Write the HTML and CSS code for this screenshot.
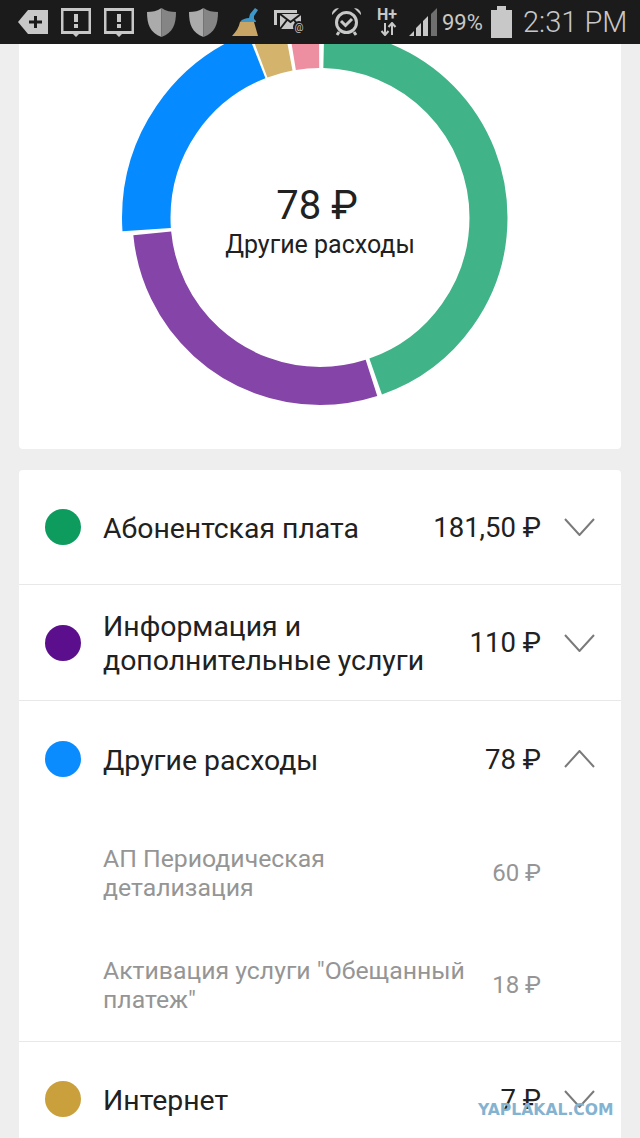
FILE: index.html
```html
<!DOCTYPE html>
<html>
  <head>
    <meta charset="UTF-8" />
    <title>Расходы</title>
    <link rel="stylesheet" href="styles.css">
  </head>
  <body>
    <header class="status-bar">
      <svg class="icon icon-tag" viewBox="0 0 30 24">
        <path class="fill-light" d="M0 12 10 0h20v24H10z" />
        <path class="line-dark" d="M11 12h13M17.500 6v12" />
      </svg>
      <svg class="icon icon-note" viewBox="0 0 30 29">
        <path class="fill-light" d="M0 0h30v26H18l-3 3-3-3H0z" />
        <rect class="fill-dark" x="2.500" y="3" width="25" height="20" />
        <rect class="fill-light" x="13" y="6" width="4" height="8" />
        <rect class="fill-light" x="13" y="16" width="4" height="4" />
      </svg>
      <svg class="icon icon-note" viewBox="0 0 30 29">
        <path class="fill-light" d="M0 0h30v26H18l-3 3-3-3H0z" />
        <rect class="fill-dark" x="2.500" y="3" width="25" height="20" />
        <rect class="fill-light" x="13" y="6" width="4" height="8" />
        <rect class="fill-light" x="13" y="16" width="4" height="4" />
      </svg>
      <svg class="icon icon-shield" viewBox="0 0 29 29">
        <path class="shield-left" d="M14.500 0C10 3 5 4 0 4c0 12 3 21 14.500 25z" />
        <path class="shield-right" d="M14.500 0c4.500 3 9.500 4 14.500 4 0 12-3 21-14.500 25z" />
      </svg>
      <svg class="icon icon-shield" viewBox="0 0 29 29">
        <path class="shield-left" d="M14.500 0C10 3 5 4 0 4c0 12 3 21 14.500 25z" />
        <path class="shield-right" d="M14.500 0c4.500 3 9.500 4 14.500 4 0 12-3 21-14.500 25z" />
      </svg>
      <svg class="icon icon-broom" viewBox="0 0 28 28">
        <path class="broom-bristle" d="M8 14h14l4 14H0C4 24 7 19 8 14z" />
        <path class="broom-blue" d="M8 14c2-3 6-4 9-4l1-4 5-6 3 2-4 6 0 3c2 1 2 3 2 3H8z" />
      </svg>
      <svg class="icon icon-mail" viewBox="0 0 31 23">
        <path class="line-light" d="M1.500 15V1.500H23" />
        <rect class="fill-light" x="6" y="4" width="21" height="15" />
        <path class="line-dark thin" d="M6 4l10.500 8L27 4M6 19l7-9M27 19l-7-9" />
        <circle class="fill-dark" cx="25" cy="17" r="6" />
        <text class="mail-at" x="25" y="21" text-anchor="middle">@</text>
      </svg>
      <div class="status-right">
        <svg class="icon icon-alarm" viewBox="0 0 29 28">
          <circle class="line-light" cx="14.500" cy="14.500" r="10" />
          <path class="line-light" d="M9 13l4.500 4.500L20 11M7 24l-2 3M22 24l2 3" />
          <path class="fill-light" d="M0 6c0-3 3-6 7-6L0 7zM29 6c0-3-3-6-7-6l7 7z" />
        </svg>
        <div class="net">
          <span class="net-label">H+</span>
          <svg class="icon icon-net" viewBox="0 0 22 14">
            <path class="line-light thin" d="M8 1v12M4.500 9l3.500 4 3.500-4M15 13V2M11.500 5l3.500-4 3.500 4" />
          </svg>
        </div>
        <svg class="icon icon-signal" viewBox="0 0 28 28">
          <path class="fill-light" d="M0 28l5-5v5zM7 28v-8l5-5v13zM14 28V13l5-5v20z" />
          <path class="fill-mid" d="M22 28V6l6-6v28z" />
        </svg>
        <span class="battery-text">99%</span>
        <svg class="icon icon-battery" viewBox="0 0 21 32">
          <path class="fill-light" d="M0 4h6V0h9v4h6v28H0z" />
        </svg>
        <span class="clock">2:31 PM</span>
      </div>
    </header>

    <main>
      <section class="card chart-card">
        <svg class="donut" viewBox="-301 -173.500 602 405">
          <g transform="rotate(-90)">
            <circle class="seg seg-green" r="168.500" pathLength="360" stroke-dasharray="159.400 360" stroke-dashoffset="-1.300" />
            <circle class="seg seg-purple" r="168.500" pathLength="360" stroke-dasharray="102.400 360" stroke-dashoffset="-162.200" />
            <circle class="seg seg-blue" r="173.750" pathLength="360" stroke-dasharray="72.600 360" stroke-dashoffset="-266" />
            <circle class="seg seg-gold" r="168.500" pathLength="360" stroke-dasharray="10 360" stroke-dashoffset="-339.400" />
            <circle class="seg seg-pink" r="168.500" pathLength="360" stroke-dasharray="9 360" stroke-dashoffset="-350.700" />
          </g>
        </svg>
        <div class="donut-center">
          <div class="donut-value">78 ₽</div>
          <div class="donut-label">Другие расходы</div>
        </div>
      </section>

      <section class="card list-card">
        <div class="row">
          <span class="dot dot-green"></span>
          <span class="row-name">Абонентская плата</span>
          <span class="row-sum">181,50 ₽</span>
          <svg class="chevron" viewBox="0 0 31 18"><path d="M1 1l14.500 16L30 1" /></svg>
        </div>
        <div class="row row-tall">
          <span class="dot dot-purple"></span>
          <span class="row-name">Информация и дополнительные услуги</span>
          <span class="row-sum">110 ₽</span>
          <svg class="chevron" viewBox="0 0 31 18"><path d="M1 1l14.500 16L30 1" /></svg>
        </div>
        <div class="group">
          <div class="row row-open">
            <span class="dot dot-blue"></span>
            <span class="row-name">Другие расходы</span>
            <span class="row-sum">78 ₽</span>
            <svg class="chevron" viewBox="0 0 31 18"><path d="M1 17L15.500 1 30 17" /></svg>
          </div>
          <div class="sub-row">
            <span class="sub-name">АП Периодическая детализация</span>
            <span class="sub-sum">60 ₽</span>
          </div>
          <div class="sub-row">
            <span class="sub-name">Активация услуги "Обещанный платеж"</span>
            <span class="sub-sum">18 ₽</span>
          </div>
        </div>
        <div class="row">
          <span class="dot dot-gold"></span>
          <span class="row-name">Интернет</span>
          <span class="row-sum">7 ₽</span>
          <svg class="chevron" viewBox="0 0 31 18"><path d="M1 1l14.500 16L30 1" /></svg>
        </div>
      </section>
    </main>

    <div class="watermark">YAPLAKAL.COM</div>
  </body>
</html>
```

FILE: styles.css
```css
html,
body {
  height: 1138px;
  overflow: hidden;
}

body {
  margin: 0;
  background-color: #eeeeee;
  color: #212121;
  font-family: Roboto, "Liberation Sans", sans-serif;
  position: relative;
}

/* status bar */
.status-bar {
  height: 44px;
  box-sizing: border-box;
  padding-left: 18px;
  background-color: #1b1b1b;
  display: flex;
  align-items: center;
  gap: 13px;
  color: #c8c8c8;
}

.status-right {
  display: flex;
  align-items: center;
  margin-left: 14px;
}

.icon {
  display: block;
  flex: none;
}

.icon-tag { width: 30px; height: 24px; }
.icon-note { width: 30px; height: 29px; }
.icon-shield { width: 29px; height: 29px; }
.icon-broom { width: 28px; height: 28px; margin-left: 1px; }
.icon-mail { width: 31px; height: 23px; margin: 0 0 1px 1px; }
.icon-alarm { width: 29px; height: 28px; margin-right: 16px; }
.icon-net { width: 22px; height: 14px; }
.icon-signal { width: 28px; height: 28px; margin-right: 5px; }
.icon-battery { width: 21px; height: 32px; margin: 0 11px 0 9px; }

.fill-light { fill: #c8c8c8; }
.fill-mid { fill: #6f6f6f; }
.fill-dark { fill: #1b1b1b; }
.shield-left { fill: #ababab; }
.shield-right { fill: #858585; }
.broom-bristle { fill: #c9a565; }
.broom-blue { fill: #3d97c9; }

.line-light,
.line-dark {
  fill: none;
  stroke-width: 3;
}

.line-light { stroke: #c8c8c8; }
.line-dark { stroke: #1b1b1b; }
.thin { stroke-width: 2; }

.mail-at {
  font-size: 10px;
  fill: #c8c8c8;
}

.net {
  width: 22px;
  margin-right: 10px;
}

.net-label {
  display: block;
  font-size: 16px;
  font-weight: 700;
  line-height: 14px;
  white-space: nowrap;
}

.battery-text {
  font-size: 22px;
  width: 40px;
  white-space: nowrap;
}

.clock {
  font-size: 29px;
  font-weight: 300;
  white-space: nowrap;
}

/* cards */
main {
  padding: 0 19px;
}

.card {
  background-color: #ffffff;
  border-radius: 4px;
  position: relative;
}

.chart-card {
  height: 405px;
  border-radius: 0 0 4px 4px;
  margin-bottom: 21px;
}

.donut {
  display: block;
  width: 602px;
  height: 405px;
}

.seg {
  fill: none;
  stroke-width: 38;
}

.seg-green { stroke: #40b388; }
.seg-purple { stroke: #8544a8; }
.seg-blue { stroke: #058bff; stroke-width: 48.500; }
.seg-gold { stroke: #d4b46c; }
.seg-pink { stroke: #ed8fa0; }

.donut-center {
  position: absolute;
  top: 138px;
  left: 0;
  right: 0;
  text-align: center;
}

.donut-value {
  font-size: 40px;
  line-height: 48px;
  padding-right: 6px;
}

.donut-label {
  font-size: 25px;
  line-height: 32px;
  margin-top: -1px;
}

/* list */
.row {
  height: 115px;
  box-sizing: border-box;
  padding: 0 26px;
  display: flex;
  align-items: center;
  border-bottom: 1px solid #e8e8e8;
}

.row-tall {
  height: 116px;
}

.row-open {
  height: 116px;
  border-bottom: none;
}

.group {
  border-bottom: 1px solid #e8e8e8;
}

.dot {
  flex: none;
  width: 36px;
  height: 36px;
  border-radius: 50%;
  margin-right: 22px;
}

.dot-green { background-color: #0d9c5e; }
.dot-purple { background-color: #5b0f8c; }
.dot-blue { background-color: #0a8cff; }
.dot-gold { background-color: #c9a03c; }

.row-name {
  flex: 1;
  font-size: 28.400px;
  line-height: 34px;
  padding-top: 3px;
}

.row-sum {
  flex: none;
  margin-left: 10px;
  font-size: 27.500px;
  white-space: nowrap;
}

.chevron {
  flex: none;
  width: 31px;
  height: 18px;
  margin-left: 23px;
}

.chevron path {
  fill: none;
  stroke: #7a7a7a;
  stroke-width: 2;
}

.sub-row {
  height: 112px;
  box-sizing: border-box;
  padding: 0 80px 0 84px;
  display: flex;
  align-items: center;
  color: #959595;
}

.sub-name {
  flex: 1;
  font-size: 24.800px;
  line-height: 29px;
}

.sub-sum {
  flex: none;
  margin-left: 20px;
  font-size: 24px;
  white-space: nowrap;
}

.watermark {
  position: absolute;
  left: 478px;
  top: 1101px;
  font-family: "DejaVu Sans", sans-serif;
  font-size: 15.600px;
  font-weight: 700;
  line-height: 18px;
  color: #84b3d2;
  white-space: nowrap;
}
```
